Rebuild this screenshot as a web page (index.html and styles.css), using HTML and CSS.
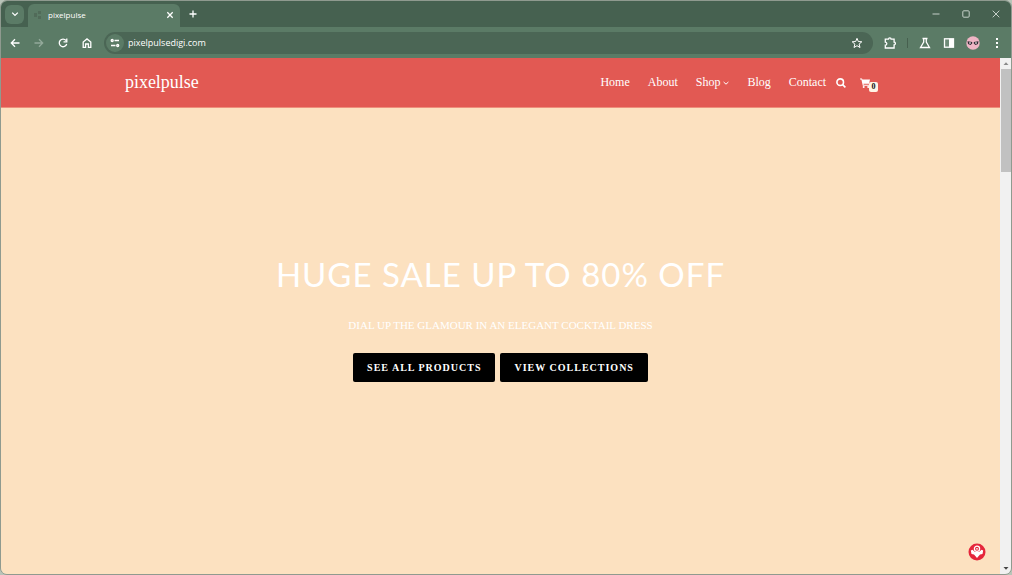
FILE: index.html
```html
<!DOCTYPE html>
<html lang="en">
<head>
<meta charset="utf-8">
<title>pixelpulse</title>
<link rel="stylesheet" href="styles.css">
</head>
<body>
<div class="window">
  <div class="titlebar">
    <button class="tab-search" aria-label="Search tabs"><svg width="8" height="8" viewBox="0 0 8 8"><path d="M1.200 2.600 4 5.400l2.800-2.800"/></svg></button>
    <div class="tab">
      <svg class="favicon" width="10" height="10" viewBox="0 0 10 10"><path d="M1 3h3v4H1zM5 1h3v3H5zM5 6h3v3H5z"/></svg>
      <span class="tab-title">pixelpulse</span>
      <button class="icon" aria-label="Close tab"><svg width="8" height="8" viewBox="0 0 8 8"><path d="m1.300 1.300 5.400 5.400M6.700 1.300 1.300 6.700"/></svg></button>
    </div>
    <button class="icon new-tab" aria-label="New tab"><svg width="8" height="8" viewBox="0 0 8 8"><path d="M4 .5v7M.5 4h7"/></svg></button>
    <div class="controls">
      <button class="icon" aria-label="Minimize"><svg width="8" height="8" viewBox="0 0 8 8"><path d="M.5 4h7"/></svg></button>
      <button class="icon" aria-label="Maximize"><svg width="8" height="8" viewBox="0 0 8 8"><rect x=".8" y=".8" width="6.400" height="6.400" rx="1"/></svg></button>
      <button class="icon" aria-label="Close"><svg width="8" height="8" viewBox="0 0 8 8"><path d="m.7.7 6.600 6.600M7.300.7.7 7.300"/></svg></button>
    </div>
  </div>
  <div class="toolbar">
    <div class="nav-buttons">
      <button class="icon" aria-label="Back"><svg width="10" height="10" viewBox="0 0 10 10"><path d="M9.500 5H1.500M5 1.300 1.300 5 5 8.700"/></svg></button>
      <button class="icon dim" aria-label="Forward"><svg width="10" height="10" viewBox="0 0 10 10"><path d="M.5 5h8M5 1.300 8.700 5 5 8.700"/></svg></button>
      <button class="icon" aria-label="Reload"><svg width="10" height="10" viewBox="0 0 10 10"><path d="M8.700 6A3.800 3.800 0 1 1 8 2.500M8.800.5v3.300H5.500"/></svg></button>
      <button class="icon" aria-label="Home page"><svg width="10" height="10" viewBox="0 0 10 10"><path d="M1.200 9.300V4L5 .9 8.800 4v5.300H6.400V6H3.600v3.300z"/></svg></button>
    </div>
    <div class="omnibox">
      <button class="site-info" aria-label="Site information"><svg width="10" height="10" viewBox="0 0 10 10"><path d="M4.500 2.500H9M1 7.500h4.500"/><circle cx="2.200" cy="2.500" r="1"/><circle cx="7.700" cy="7.500" r="1"/></svg></button>
      <input class="url" type="text" aria-label="Address" value="pixelpulsedigi.com">
      <button class="icon star" aria-label="Bookmark"><svg width="12" height="12" viewBox="0 0 12 12"><path d="m6 1.300 1.300 3.200 3.500.3-2.700 2.300.9 3.400-3-1.800-3 1.800.9-3.400-2.700-2.300 3.500-.3z"/></svg></button>
    </div>
    <button class="icon ext" aria-label="Extensions"><svg width="12" height="12" viewBox="0 0 12 12"><path d="M1.300 2.200H4.500a1.300 1.300 0 0 1 2.600 0h3V5.200a1.300 1.300 0 0 1 0 2.600v3.200H1.300V8.200a1.500 1.500 0 0 0 0-3z"/></svg></button>
    <span class="divider"></span>
    <div class="actions">
      <button class="icon" aria-label="Labs"><svg width="12" height="12" viewBox="0 0 12 12"><path d="M3.500 1.500h5M4.700 1.500v3.500L1.500 10.500h9L7.300 5V1.500"/></svg></button>
      <button class="icon" aria-label="Side panel"><svg width="12" height="12" viewBox="0 0 12 12"><rect x="1.500" y="1.800" width="9" height="8.400"/><path class="solid-only" d="M1.500 1.800H6v8.400H1.500z" opacity=".12"/><path class="solid-only" d="M6 1.800h1.500v8.400H6z"/><path class="solid-only" d="M6.500 1.800h4v8.400h-4z"/></svg></button>
      <button class="icon" aria-label="Profile"><svg width="14" height="14" viewBox="0 0 14 14"><circle class="face" cx="7" cy="7" r="6.700"/><path class="shades" d="M1.500 5.200 6.200 6v1.500L4.500 9 2 8zM12.500 5.200 7.800 6v1.500L9.500 9 12 8z"/><path class="glint" d="M3 7h2M9 7h2"/></svg></button>
      <button class="icon" aria-label="Menu"><svg width="12" height="12" viewBox="0 0 12 12"><path class="solid-only" d="M5 1h2v2H5zM5 5h2v2H5zM5 9h2v2H5z"/></svg></button>
    </div>
  </div>
  <div class="viewport">
    <div class="page">
      <header class="site-header">
        <div class="container">
          <a class="brand" href="#">pixelpulse</a>
          <nav class="menu">
            <a href="#">Home</a>
            <a href="#">About</a>
            <a href="#" class="has-sub">Shop<svg width="6" height="6" viewBox="0 0 6 6"><path d="m.6 2 2.400 2.200L5.400 2"/></svg></a>
            <a href="#">Blog</a>
            <a href="#">Contact</a>
          </nav>
          <button class="search" aria-label="Search"><svg width="10" height="10" viewBox="0 0 10 10"><circle cx="4.200" cy="4.200" r="3.300"/><path d="m6.600 6.600 2.800 2.800"/></svg></button>
          <a class="cart" href="#" aria-label="Cart"><svg width="10" height="10" viewBox="0 0 10 10"><path d="M0 .5h2l.4 1H10L9 5.800H3.500l.2.900H9v1H2.800L1.400 1.500H0z"/><circle cx="3.700" cy="8.900" r="1"/><circle cx="8.200" cy="8.900" r="1"/></svg><span class="count">0</span></a>
        </div>
      </header>
      <main class="hero">
        <h1>HUGE SALE UP TO 80% OFF</h1>
        <p>DIAL UP THE GLAMOUR IN AN ELEGANT COCKTAIL DRESS</p>
        <div class="cta">
          <a class="button" href="#">SEE ALL PRODUCTS</a>
          <a class="button" href="#">VIEW COLLECTIONS</a>
        </div>
      </main>
      <button class="chat" aria-label="Help"><svg width="18" height="18" viewBox="0 0 18 18"><circle class="disc" cx="9" cy="9" r="8.500"/><path class="body" d="M2.800 7.500 4.500 6.800 7 9h4l2.500-2.200 1.700.7-.7 3.500-2.500.5L9 15l-3-3.500-2.500-.5z"/><circle class="ring" cx="9" cy="5.800" r="2.600"/><circle class="eye" cx="9" cy="5.800" r=".9"/></svg></button>
    </div>
    <div class="scrollbar">
      <svg width="10" height="11" viewBox="0 0 10 11"><path d="M2.500 7 5 4.300 7.500 7z" fill="#8a8a8a"/></svg>
      <span class="thumb"></span>
      <svg width="10" height="11" viewBox="0 0 10 11"><path d="M2.500 4 5 6.700 7.500 4z" fill="#444"/></svg>
    </div>
  </div>
</div>
</body>
</html>
```
FILE: styles.css
```css
* { box-sizing: border-box; }
body { margin: 0; background: #b9c4b8; font-family: "Open Sans", sans-serif; }
button { border: 0; padding: 0; background: none; color: inherit; }
a { color: inherit; text-decoration: none; }
svg { display: block; fill: none; stroke: currentColor; stroke-width: 1.3; }

.window { display: flex; flex-direction: column; height: 100vh; border: 1px solid #8f9a8f; border-radius: 7px; overflow: hidden; color: #fff; }
.titlebar { display: flex; align-items: center; height: 26px; padding: 0 4px; background: #466150; flex: none; }
.icon { display: grid; place-items: center; width: 16px; height: 16px; flex: none; }
.tab-search { display: grid; place-items: center; width: 19px; height: 19px; border-radius: 6px; background: #5b7b66; }
.tab { display: flex; align-items: center; align-self: flex-end; width: 152px; height: 23px; margin-left: 4px; padding: 0 2px 2px 5px; border-radius: 6px 6px 0 0; background: #5b7b66; font-size: 8px; }
.favicon { fill: #516b59; stroke: none; }
.tab-title { flex: 1; margin-left: 5px; }
.new-tab { margin-left: 5px; }
.controls { display: flex; gap: 14px; margin-left: auto; margin-right: 3px; }
.controls svg { stroke-width: 1; color: #c5d0c8; }

.toolbar { display: flex; align-items: center; height: 31px; padding: 0 6px; background: #5b7b66; flex: none; }
.nav-buttons { display: flex; gap: 8px; }
.dim { color: #93a99a; }
.omnibox { display: flex; align-items: center; flex: 1; height: 22px; margin-left: 9px; padding: 0 8px 0 2px; border-radius: 11px; background: #4b6655; }
.site-info { display: grid; place-items: center; width: 18px; height: 18px; border-radius: 50%; background: #5b7b66; }
.url { flex: 1; min-width: 0; margin-left: 4px; padding: 0; border: 0; background: none; color: #fff; font: 9px "Open Sans", sans-serif; }
.star svg { stroke-width: 1; }
.ext { margin-left: 9px; }
.divider { width: 1px; height: 10px; margin: 0 9px; background: #47604f; }
.actions { display: flex; gap: 8px; }
.solid-only { fill: #fff; stroke: none; }
.face { fill: #efb5c5; stroke: none; }
.shades { fill: #342a35; stroke: none; }
.glint { stroke: #fff; stroke-width: 1; }

.viewport { display: flex; flex: 1; min-height: 0; }
.page { position: relative; display: flex; flex-direction: column; flex: 1; background: #fce1c0; font-family: "Liberation Serif", serif; }
.site-header { height: 50px; background: #e25953; border-bottom: 1px solid #ee8f7c; }
.container { display: flex; align-items: center; width: 76%; height: 100%; margin: 0 auto; padding: 0 2px 0 4px; }
.brand { font-size: 18px; }
.menu { display: flex; gap: 18px; margin-left: auto; font-size: 12px; }
.has-sub { display: flex; align-items: center; gap: 3px; }
.has-sub svg { stroke-width: 1; }
.search { margin-left: 10px; }
.search svg { stroke-width: 1.6; }
.cart { position: relative; margin-left: 14px; padding-right: 8px; }
.cart svg { fill: #fff; stroke: none; }
.count { position: absolute; right: 0; top: 4px; width: 9px; border-radius: 2px; background: #fff3e5; color: #111; font-size: 8px; line-height: 10px; font-weight: bold; text-align: center; }

.hero { display: flex; flex: 1; flex-direction: column; align-items: center; justify-content: center; padding-bottom: 46px; }
h1 { margin: 0; font: 33px/40px Lato, sans-serif; letter-spacing: 1px; }
p { margin: 23px 0 20px; font-size: 11px; line-height: 16px; }
.cta { display: flex; gap: 5px; }
.button { padding: 0 14px; border-radius: 2px; background: #000; font-size: 10px; font-weight: bold; line-height: 29px; letter-spacing: 1px; }
.chat { position: absolute; right: 14px; bottom: 13px; }
.disc { fill: #e5263b; stroke: none; }
.ring { stroke: #fff; fill: #e5263b; }
.eye, .body { fill: #fff; stroke: none; }

.scrollbar { display: flex; flex-direction: column; width: 11px; padding-left: 1px; background: #f1f1f1; }
.scrollbar svg { stroke: none; flex: none; }
.thumb { height: 20%; margin-bottom: auto; background: #c1c1c1; }
```
